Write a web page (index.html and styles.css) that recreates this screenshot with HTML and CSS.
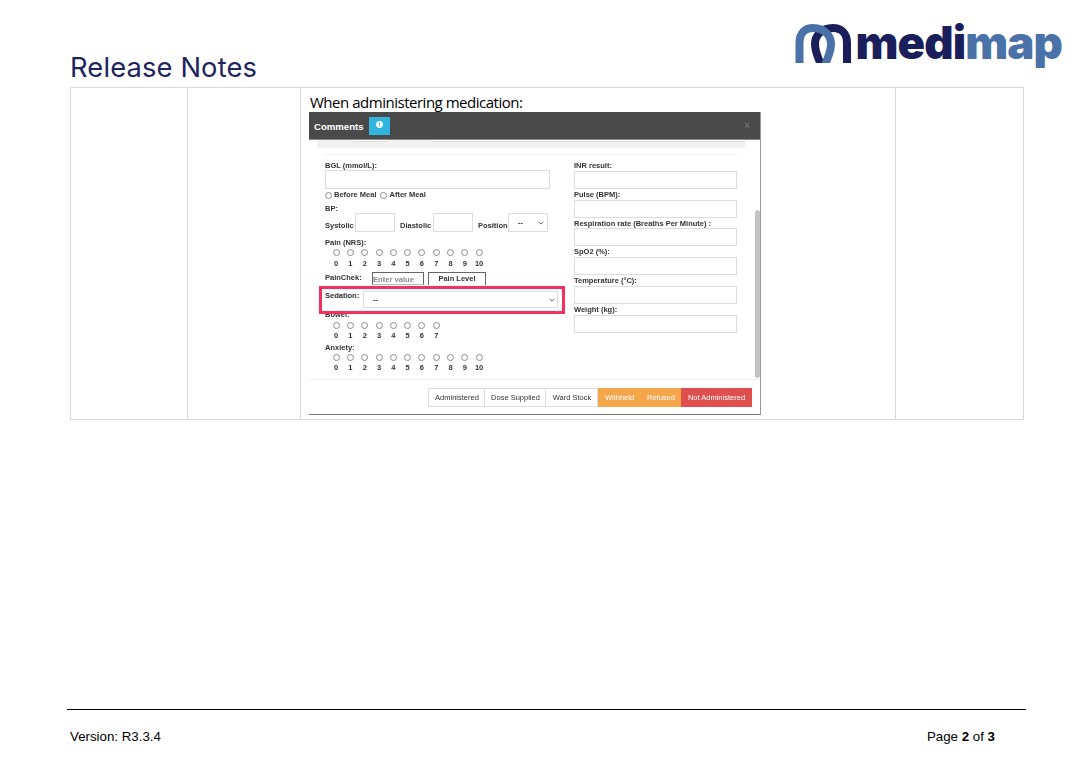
FILE: index.html
```html
<!DOCTYPE html>
<html lang="en">
<head>
<meta charset="utf-8">
<title>Release Notes</title>
<link rel="stylesheet" href="styles.css">
</head>
<body>
<div class="page">
  <header class="head">
    <h1 class="title">Release Notes</h1>
    <div class="logo">
      <svg class="logo-mark" width="58" height="40" viewBox="794 23 58 40">
        <path d="M847 66 L847 43 C847 32 840 28 833 28 C821 28 815 36 815 44 C815 53 819 58 821 66" fill="none" stroke="#1a1f5c" stroke-width="8"/>
        <path d="M799.500 66 L799.500 43 C799.500 32 806 28 813 28 C825 28 831 36 831 44 C831 53 827 58 825 66" fill="none" stroke="#4a72a8" stroke-width="8"/>
      </svg>
      <span class="logo-text"><span class="logo-dark">medi</span><span class="logo-blue">map</span></span>
    </div>
  </header>

  <div class="table">
    <div class="cell"></div>
    <div class="cell"></div>
    <div class="cell cell-main">
      <p class="lead">When administering medication:</p>
      <div class="shot">
        <div class="dialog">
          <div class="dlg-head">
            <span class="dlg-title">Comments</span>
            <span class="badge"><svg width="7" height="7" viewBox="0 0 7 7"><circle cx="3.5" cy="3.5" r="3.4" fill="#fff"/><rect x="3" y="1.4" width="1" height="2.6" fill="#31b5de"/><rect x="3" y="4.6" width="1" height="1" fill="#31b5de"/></svg></span>
            <span class="dlg-close">×</span>
          </div>
          <div class="dlg-scroll">
            <div class="dlg-main">
              <div class="strip"><span class="strip-a"></span><span class="strip-b"></span></div>
              <div class="rule"></div>
              <div class="cols">
                <div class="col-left">
                  <div class="lbl">BGL (mmol/L):</div>
                  <div class="inp inp-full"></div>
                  <div class="meal"><span class="radio"></span><span>Before Meal</span><span class="radio"></span><span>After Meal</span></div>
                  <div class="lbl lbl-bp">BP:</div>
                  <div class="bp">
                    <span class="bp-lbl bp-sys">Systolic</span><span class="inp inp-bp"></span>
                    <span class="bp-lbl bp-dia">Diastolic</span><span class="inp inp-bp"></span>
                    <span class="bp-lbl bp-pos">Position</span>
                    <span class="inp sel-small">--<svg class="chev" width="6" height="4" viewBox="0 0 6 4"><path d="M.7.8 3 3.1 5.3.8" fill="none" stroke="#555" stroke-width=".9"/></svg></span>
                  </div>
                  <div class="lbl lbl-pain">Pain (NRS):</div>
                  <div class="scale"><span class="radio"></span><span class="radio"></span><span class="radio"></span><span class="radio"></span><span class="radio"></span><span class="radio"></span><span class="radio"></span><span class="radio"></span><span class="radio"></span><span class="radio"></span><span class="radio"></span></div>
                  <div class="nums nums-p"><span>0</span><span>1</span><span>2</span><span>3</span><span>4</span><span>5</span><span>6</span><span>7</span><span>8</span><span>9</span><span>10</span></div>
                  <div class="chek">
                    <span class="chek-lbl">PainChek:</span>
                    <span class="chek-inp">Enter value</span>
                    <span class="chek-btn">Pain Level</span>
                  </div>
                  <div class="sed">
                    <span class="sed-lbl">Sedation:</span>
                    <span class="inp sed-sel">--<svg class="chev" width="6" height="4" viewBox="0 0 6 4"><path d="M.7.8 3 3.1 5.3.8" fill="none" stroke="#555" stroke-width=".9"/></svg></span>
                  </div>
                  <div class="lbl lbl-bowel">Bowel:</div>
                  <div class="scale scale-b"><span class="radio"></span><span class="radio"></span><span class="radio"></span><span class="radio"></span><span class="radio"></span><span class="radio"></span><span class="radio"></span><span class="radio"></span></div>
                  <div class="nums"><span>0</span><span>1</span><span>2</span><span>3</span><span>4</span><span>5</span><span>6</span><span>7</span></div>
                  <div class="lbl lbl-anx">Anxiety:</div>
                  <div class="scale scale-a"><span class="radio"></span><span class="radio"></span><span class="radio"></span><span class="radio"></span><span class="radio"></span><span class="radio"></span><span class="radio"></span><span class="radio"></span><span class="radio"></span><span class="radio"></span><span class="radio"></span></div>
                  <div class="nums"><span>0</span><span>1</span><span>2</span><span>3</span><span>4</span><span>5</span><span>6</span><span>7</span><span>8</span><span>9</span><span>10</span></div>
                </div>
                <div class="col-right">
                  <div class="lbl">INR result:</div><div class="inp inp-r"></div>
                  <div class="lbl">Pulse (BPM):</div><div class="inp inp-r"></div>
                  <div class="lbl">Respiration rate (Breaths Per Minute) :</div><div class="inp inp-r"></div>
                  <div class="lbl">SpO2 (%):</div><div class="inp inp-r"></div>
                  <div class="lbl">Temperature (°C):</div><div class="inp inp-r"></div>
                  <div class="lbl">Weight (kg):</div><div class="inp inp-r"></div>
                </div>
              </div>
            </div>
            <div class="track"><div class="thumb"></div></div>
          </div>
          <div class="dlg-foot">
            <span class="btn btn-a">Administered</span>
            <span class="btn btn-d">Dose Supplied</span>
            <span class="btn btn-w">Ward Stock</span>
            <span class="btn btn-o btn-wh">Withheld</span>
            <span class="btn btn-o btn-re">Refused</span>
            <span class="btn btn-r">Not Administered</span>
          </div>
        </div>
      </div>
    </div>
    <div class="cell cell-last"></div>
  </div>

  <footer class="foot">
    <span>Version: R3.3.4</span>
    <span>Page <b>2</b> of <b>3</b></span>
  </footer>
</div>
</body>
</html>
```

FILE: styles.css
```css
* { box-sizing: border-box; }
html, body { margin: 0; padding: 0; background: #fff; }
body { font-family: "Liberation Sans", Arial, sans-serif; }
.page { width: 1087px; height: 760px; overflow: hidden; }

.head { height: 87px; display: flex; justify-content: space-between; padding: 0 25px 0 70px; }
.title { margin: 50px 0 0; font: 400 27.3px/36px Inter, sans-serif; color: #1d2460; letter-spacing: 0.15px; }
.logo { display: flex; align-items: flex-start; margin-top: 22px; height: 50px; }
.logo-mark { display: block; margin-top: 1px; }
.logo-text { font: 900 45.5px/42px Inter, sans-serif; margin-left: 3px; letter-spacing: -0.9px; height: 50px; }
.logo-dark { color: #1a1f5c; }
.logo-blue { color: #4a72a8; }

.table { margin-left: 70px; width: 954px; height: 333px; display: grid; grid-template-columns: 117px 113px 595px 129px; border: 1px solid #d9d9d9; }
.cell { border-right: 1px solid #d9d9d9; }
.cell-last { border-right: 0; }
.cell-main { padding: 5px 0 0 8px; }
.lead { margin: 0 0 0 1px; font: 400 15px/19px "Open Sans", sans-serif; letter-spacing: -0.48px; color: #000; height: 19px; white-space: nowrap; }

.shot { filter: blur(0.35px); }
.dialog { width: 452px; height: 303px; border-right: 1px solid #999; border-bottom: 1px solid #777; color: #333; font-size: 7.5px; font-weight: 700; display: flex; flex-direction: column; }
.dlg-head { height: 28px; flex: none; background: #4a4a4a; display: flex; align-items: center; padding: 0 10px 0 5px; border-bottom: 1px solid #888; }
.dlg-title { color: #fff; font-size: 9.6px; margin-top: 1px; }
.badge { width: 21px; height: 18px; margin-left: 5px; background: #31b5de; display: flex; align-items: center; justify-content: center; }
.badge svg { margin-top: -3px; }
.dlg-close { margin-left: auto; color: #6e6e6e; font-size: 10px; }

.dlg-scroll { height: 240px; display: flex; flex: none; overflow: hidden; border-bottom: 1px solid #eee; }
.dlg-main { width: 446px; flex: none; }
.track { width: 5px; flex: none; }
.thumb { width: 5px; height: 168px; margin-top: 70px; background: #c4c4c4; border-radius: 3px; }
.strip { margin-left: 8px; width: 428px; height: 8px; background: #f1f1f1; display: flex; align-items: flex-start; }
.strip-a { width: 34px; height: 2px; margin-left: 36px; background: #fff; border-bottom: 1px solid #ddd; }
.strip-b { width: 313px; height: 2px; margin-left: 45px; background: #fff; border-bottom: 1px solid #ddd; }
.rule { margin: 6px 0 0 16px; width: 412px; height: 1px; background: #eee; }

.cols { display: grid; grid-template-columns: 225px 163px; column-gap: 24px; margin: 5px 0 0 16px; }
.col-left, .col-right { min-width: 0; }
.lbl { height: 10px; line-height: 11px; white-space: nowrap; }
.inp { display: block; background: #fff; border: 1px solid #ddd; }
.inp-full { height: 19px; }
.inp-r { height: 18px; }
.col-right .lbl { height: 10.8px; }

.meal { height: 10px; margin-top: 1px; line-height: 10px; display: flex; align-items: center; }
.meal .radio { margin-right: 2px; }
.meal span + .radio { margin-left: 3px; margin-right: 3px; }
.radio { display: block; width: 7px; height: 7px; border: 1px solid #8a8a8a; border-radius: 50%; background: #fff; }

.lbl-bp { margin-top: 3px; }
.bp { height: 19px; display: flex; align-items: center; }
.bp-lbl { margin-top: 5px; }
.inp-bp { width: 40px; height: 19px; }
.bp-sys { width: 30px; }
.bp-dia { margin-left: 5px; width: 33px; }
.bp-pos { margin-left: 5px; width: 30px; }
.sel-small { width: 40px; height: 19px; padding-left: 9px; line-height: 17px; display: flex; align-items: center; justify-content: space-between; padding-right: 3px; }
.lbl-pain { margin-top: 5px; }

.scale { display: grid; grid-template-columns: repeat(11, 14.3px); margin: 1px 0 0 4px; height: 8px; justify-items: center; align-items: center; }
.nums { display: grid; grid-template-columns: repeat(11, 14.3px); margin: 2px 0 0 4px; height: 10px; line-height: 10px; justify-items: center; }
.nums-p { margin-top: 3px; }
.scale-b { margin-top: 2px; }
.scale-a { margin-top: 1px; }
.lbl-anx { margin-top: 1px; }

.chek { height: 13px; margin-top: 3px; display: flex; align-items: center; }
.chek-lbl { width: 47px; margin-top: -2px; }
.chek-inp { width: 52px; height: 13px; border: 1px solid #666; border-bottom-color: #bbb; color: #8a8a8a; padding-left: 0; line-height: 13px; font-size: 7.6px; }
.chek-btn { width: 58px; height: 13px; margin-left: 4px; border: 1px solid #666; border-bottom: 0; text-align: center; line-height: 11px; }

.sed { position: relative; z-index: 1; margin: 1px -20px 0 -6px; height: 28px; width: 246px; border: 3px solid #f5305f; background: #fff; display: flex; align-items: flex-start; padding: 2px 0 0 3px; }
.sed-lbl { width: 38px; line-height: 10px; margin-top: 0; }
.sed-sel { width: 195px; height: 17px; padding: 0 2px 0 9px; display: flex; align-items: center; justify-content: space-between; }
.lbl-bowel { margin-top: -5px; }

.dlg-foot { flex: 1; display: flex; justify-content: flex-end; padding: 8px 8px 0 0; align-items: flex-start; font-weight: 400; }
.btn { height: 19px; line-height: 17px; padding-left: 1px; border: 1px solid #ddd; border-left-width: 0; text-align: center; white-space: nowrap; color: #333; }
.btn-a { width: 57px; border-left-width: 1px; }
.btn-d { width: 61px; }
.btn-w { width: 52px; }
.btn-o { background: #f5a54a; border-color: #f5a54a; color: #fff; }
.btn-wh { width: 43px; }
.btn-re { width: 40px; }
.btn-r { width: 71px; background: #e04f4f; border-color: #e04f4f; color: #fff; }

.foot { margin: 289px 0 0 67px; width: 959px; border-top: 1px solid #000; display: flex; justify-content: space-between; padding: 18px 31px 0 3px; font-size: 13.3px; line-height: 17px; color: #000; }
```
